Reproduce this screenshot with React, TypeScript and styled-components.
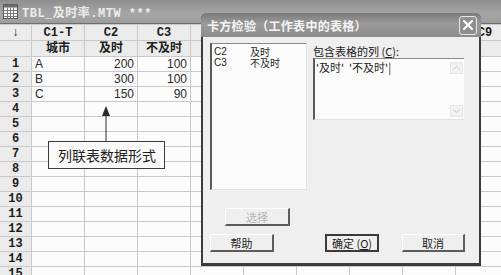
import React from 'react';
import styled, { createGlobalStyle } from 'styled-components';

const GlobalStyle = createGlobalStyle`
  html, body {
    margin: 0;
    padding: 0;
    width: 501px;
    height: 275px;
    overflow: hidden;
    background: #ffffff;
  }
`;

const Page = styled.div`
  position: relative;
  width: 501px;
  height: 275px;
  overflow: hidden;
  font-family: "Liberation Sans", "Noto Sans CJK SC", sans-serif;
`;

const WorksheetTitle = styled.div`
  height: 23px;
  display: flex;
  align-items: center;
  gap: 4px;
  padding-left: 3px;
  background: linear-gradient(to bottom, #8e8e8e, #a6a6a6 60%, #9c9c9c);
  border-bottom: 1px solid #6e6e6e;
  color: #ececec;
  font-family: "Liberation Mono", "Noto Sans CJK SC", monospace;
  font-weight: bold;
  font-size: 12px;
  letter-spacing: 0.5px;
`;

const WorksheetBody = styled.div`
  display: flex;
  height: 251px;
`;

const LeftEdge = styled.div`
  width: 3px;
  background: linear-gradient(to right, #6f6f6f, #a0a0a0);
`;

const Grid = styled.div`
  display: grid;
  grid-template-columns: 31px repeat(9, 52px);
  grid-auto-rows: 14px;
  grid-template-rows: 15px 15px;
  gap: 1px;
  background: #c9c9c9;
  padding-top: 1px;
  align-content: start;
`;

const HeadCell = styled.div<{ $shift?: number }>`
  background: #ebebeb;
  display: flex;
  align-items: center;
  justify-content: center;
  padding-left: ${p => p.$shift ?? 0}px;
  font-family: "Liberation Mono", "Noto Sans CJK SC", monospace;
  font-weight: bold;
  font-size: 12px;
  color: #1c1c1c;
  line-height: 1;
`;

const Cell = styled.div<{ $align?: 'left' | 'right' }>`
  background: #fcfcfc;
  display: flex;
  align-items: center;
  justify-content: ${p => (p.$align === 'right' ? 'flex-end' : 'flex-start')};
  padding: 0 3px;
  font-size: 12px;
  color: #2a2a2a;
  line-height: 1;
`;

const Callout = styled.div`
  position: absolute;
  left: 48px;
  top: 141px;
  width: 117px;
  height: 28px;
  box-sizing: border-box;
  border: 1px solid #3a3a3a;
  background: #fafafa;
  display: flex;
  align-items: center;
  padding-left: 9px;
  font-family: "Noto Sans CJK SC", sans-serif;
  font-size: 14px;
  color: #1e1e1e;
`;

const CalloutArrow = styled.svg`
  position: absolute;
  left: 100px;
  top: 106px;
`;

const Dialog = styled.div`
  position: absolute;
  left: 201px;
  top: 13px;
  width: 280px;
  height: 253px;
  box-sizing: border-box;
  display: flex;
  flex-direction: column;
  background: #efefef;
  border: 2px solid #3b3b3b;
  border-top: none;
  border-bottom-width: 3px;
  border-radius: 6px 6px 0 0;
  font-family: "Noto Sans CJK SC", sans-serif;
`;

const DialogTitle = styled.div`
  height: 24px;
  margin: 0 -2px;
  display: flex;
  align-items: center;
  justify-content: space-between;
  padding: 0 4px 0 6px;
  border-radius: 6px 6px 0 0;
  background: linear-gradient(to bottom, #7a7a7a, #9a9a9a 45%, #8c8c8c);
  color: #f4f4f4;
  font-size: 12px;
  font-weight: bold;
  letter-spacing: 0.3px;
`;

const CloseButton = styled.div`
  width: 18px;
  height: 19px;
  box-sizing: border-box;
  border: 1px solid #e6e6e6;
  border-radius: 3px;
  background: #8f8f8f;
  display: flex;
  align-items: center;
  justify-content: center;
`;

const DialogBody = styled.div`
  display: flex;
  flex-direction: column;
  padding: 6px 14px 0 7px;
`;

const TopArea = styled.div`
  display: flex;
  gap: 6px;
  height: 147px;
`;

const ListBox = styled.div`
  width: 97px;
  height: 147px;
  box-sizing: border-box;
  background: #fcfcfc;
  border-left: 2px solid #5a5a5a;
  border-top: 1px solid #8a8a8a;
  border-right: 1px solid #e4e4e4;
  border-bottom: 1px solid #e4e4e4;
  padding: 2px 2px;
  font-size: 10px;
  line-height: 11px;
  color: #1e1e1e;
`;

const ListRow = styled.div`
  display: flex;
  height: 11px;
`;

const ListCode = styled.span`
  width: 36px;
  font-family: "Liberation Sans", sans-serif;
`;

const RightCol = styled.div`
  display: flex;
  flex-direction: column;
`;

const FieldLabel = styled.div`
  font-size: 11px;
  color: #222;
  height: 14px;
  line-height: 14px;
  margin-top: 1px;
`;

const TextBox = styled.div`
  width: 151px;
  height: 62px;
  box-sizing: border-box;
  display: flex;
  background: #fcfcfc;
  border-left: 2px solid #5a5a5a;
  border-top: 1px solid #8a8a8a;
  border-bottom: 1px solid #e2e2e2;
`;

const TextContent = styled.div`
  flex: 1;
  padding: 2px 1px;
  font-size: 11px;
  line-height: 12px;
  color: #1e1e1e;
  white-space: pre;
`;

const ScrollTrack = styled.div`
  width: 13px;
  display: flex;
  flex-direction: column;
  justify-content: space-between;
  padding: 3px 1px 2px 0;
`;

const ScrollArrow = styled.div`
  height: 10px;
  background: #f2f2f2;
  border: 1px solid #e6e6e6;
  display: flex;
  align-items: center;
  justify-content: center;
`;

const Button = styled.div<{ $width: number; $default?: boolean; $disabled?: boolean }>`
  width: ${p => p.$width}px;
  height: 18px;
  box-sizing: border-box;
  display: flex;
  align-items: center;
  justify-content: center;
  font-size: 11px;
  color: ${p => (p.$disabled ? '#b4b4b4' : '#1e1e1e')};
  background: #efefef;
  border-top: 1px solid #ffffff;
  border-left: 1px solid #ffffff;
  border-right: 2px solid #5c5c5c;
  border-bottom: 2px solid #5c5c5c;
  ${p => (p.$default ? 'border: 2px solid #3a3a3a;' : '')}
`;

const SelectRow = styled.div`
  padding-left: 15px;
  margin-top: 18px;
`;

const ButtonRow = styled.div`
  display: flex;
  margin-top: 8px;
`;

const ButtonGroup = styled.div`
  display: flex;
  gap: 23px;
  margin-left: auto;
`;

const Underline = styled.span`
  text-decoration: underline;
`;

const columns = ['C1-T', 'C2', 'C3', '', '', '', '', '', 'C9'];
const names = ['城市', '及时', '不及时', '', '', '', '', '', ''];
const data: [string, string, string][] = [
  ['A', '200', '100'],
  ['B', '300', '100'],
  ['C', '150', '90'],
];

const SheetIcon = () => (
  <svg width="15" height="15" viewBox="0 0 15 15">
    <rect x="0.5" y="0.5" width="14" height="14" fill="#f4f4f4" stroke="#5a5a5a" />
    <rect x="0.5" y="0.5" width="14" height="3" fill="#6a6a6a" />
    {[4, 7, 10].map(x => (
      <line key={x} x1={x + 0.5} y1="3.5" x2={x + 0.5} y2="14.5" stroke="#7a7a7a" />
    ))}
    {[6, 9, 12].map(y => (
      <line key={y} x1="0.5" y1={y + 0.5} x2="14.5" y2={y + 0.5} stroke="#7a7a7a" />
    ))}
  </svg>
);

export default function App() {
  const rows = Array.from({ length: 15 }, (_, i) => i + 1);
  return (
    <Page>
      <GlobalStyle />
      <WorksheetTitle>
        <SheetIcon />
        <span>TBL_及时率.MTW ***</span>
      </WorksheetTitle>
      <WorksheetBody>
        <LeftEdge />
        <Grid>
          <HeadCell>↓</HeadCell>
          {columns.map((c, i) => (
            <HeadCell key={'c' + i} $shift={i === 8 ? 6 : 0}>{c}</HeadCell>
          ))}
          <HeadCell />
          {names.map((n, i) => (
            <HeadCell key={'n' + i}>{n}</HeadCell>
          ))}
          {rows.map(r => {
            const d = data[r - 1];
            return (
              <React.Fragment key={r}>
                <HeadCell>{r}</HeadCell>
                <Cell>{d ? d[0] : ''}</Cell>
                <Cell $align="right">{d ? d[1] : ''}</Cell>
                <Cell $align="right">{d ? d[2] : ''}</Cell>
                {Array.from({ length: 6 }, (_, k) => (
                  <Cell key={k} />
                ))}
              </React.Fragment>
            );
          })}
        </Grid>
      </WorksheetBody>

      <CalloutArrow width="12" height="36" viewBox="0 0 12 36">
        <polygon points="6,0 2,10 10,10" fill="#2a2a2a" />
        <line x1="6" y1="8" x2="6" y2="36" stroke="#2a2a2a" strokeWidth="1" />
      </CalloutArrow>
      <Callout>列联表数据形式</Callout>

      <Dialog>
        <DialogTitle>
          <span>卡方检验（工作表中的表格）</span>
          <CloseButton>
            <svg width="10" height="10" viewBox="0 0 10 10">
              <path d="M1 1 L9 9 M9 1 L1 9" stroke="#ffffff" strokeWidth="2" strokeLinecap="square" />
            </svg>
          </CloseButton>
        </DialogTitle>
        <DialogBody>
          <TopArea>
            <ListBox>
              <ListRow>
                <ListCode>C2</ListCode>
                <span>及时</span>
              </ListRow>
              <ListRow>
                <ListCode>C3</ListCode>
                <span>不及时</span>
              </ListRow>
            </ListBox>
            <RightCol>
              <FieldLabel>
                包含表格的列 (<Underline>C</Underline>):
              </FieldLabel>
              <TextBox>
                <TextContent>{"'及时'  '不及时'|"}</TextContent>
                <ScrollTrack>
                  <ScrollArrow>
                    <svg width="7" height="4" viewBox="0 0 7 4">
                      <path d="M0.5 3.5 L3.5 0.5 L6.5 3.5" fill="none" stroke="#c4c4c4" />
                    </svg>
                  </ScrollArrow>
                  <ScrollArrow>
                    <svg width="7" height="4" viewBox="0 0 7 4">
                      <path d="M0.5 0.5 L3.5 3.5 L6.5 0.5" fill="none" stroke="#c4c4c4" />
                    </svg>
                  </ScrollArrow>
                </ScrollTrack>
              </TextBox>
            </RightCol>
          </TopArea>
          <SelectRow>
            <Button $width={65} $disabled>选择</Button>
          </SelectRow>
          <ButtonRow>
            <Button $width={64}>帮助</Button>
            <ButtonGroup>
              <Button $width={54} $default>
                确定 (<Underline>O</Underline>)
              </Button>
              <Button $width={63}>取消</Button>
            </ButtonGroup>
          </ButtonRow>
        </DialogBody>
      </Dialog>
    </Page>
  );
}
